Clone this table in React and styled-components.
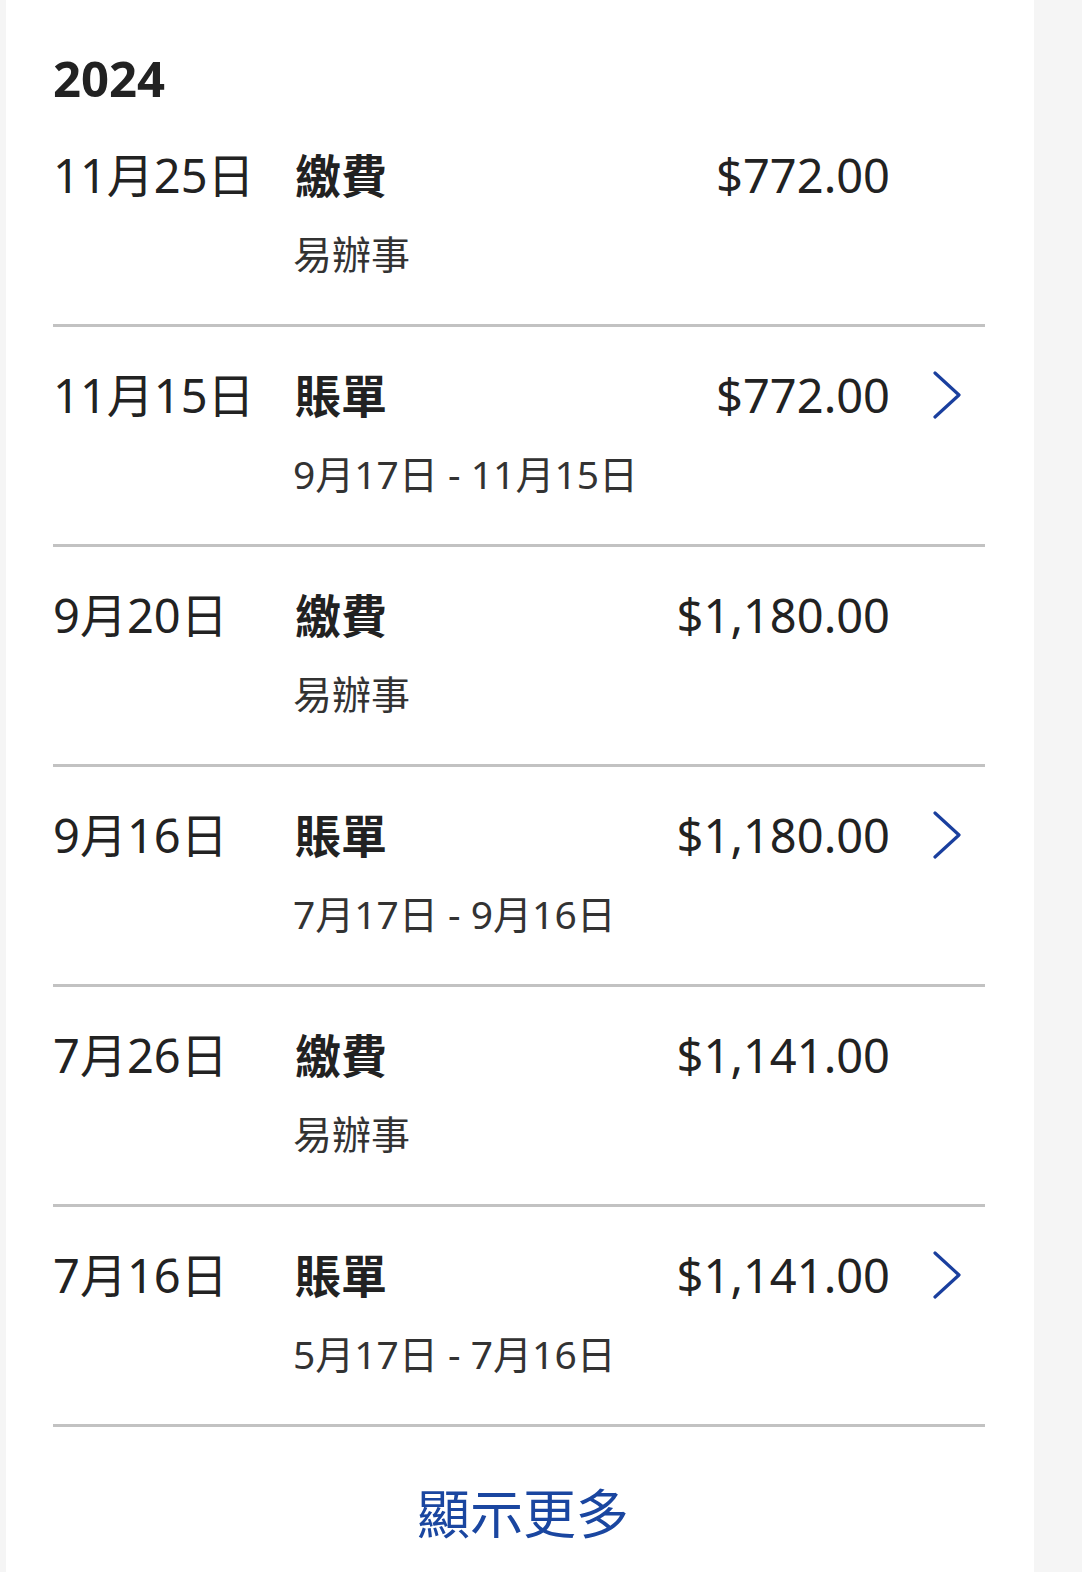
import React from 'react';
import styled, { createGlobalStyle } from 'styled-components';

const GlobalStyle = createGlobalStyle`
  html, body {
    margin: 0;
    padding: 0;
    background: #f5f5f5;
  }
  body {
    font-family: "Noto Sans", "Noto Sans CJK TC", sans-serif;
    color: #222;
  }
`;

const transactions = [
  { date: '11月25日', title: '繳費', sub: '易辦事', amount: '$772.00', link: false },
  { date: '11月15日', title: '賬單', sub: '9月17日 - 11月15日', amount: '$772.00', link: true },
  { date: '9月20日', title: '繳費', sub: '易辦事', amount: '$1,180.00', link: false },
  { date: '9月16日', title: '賬單', sub: '7月17日 - 9月16日', amount: '$1,180.00', link: true },
  { date: '7月26日', title: '繳費', sub: '易辦事', amount: '$1,141.00', link: false },
  { date: '7月16日', title: '賬單', sub: '5月17日 - 7月16日', amount: '$1,141.00', link: true },
];

const Chevron = () => (
  <svg width="30" height="48" viewBox="0 0 30 48" fill="none">
    <path
      d="M3 2 L27 24 L3 46"
      stroke="#1a3f9e"
      strokeWidth="3.2"
      strokeLinecap="round"
      strokeLinejoin="round"
    />
  </svg>
);

const App = () => {
  return (
    <>
      <GlobalStyle />
      <Page>
        <Card>
          <Year>2024</Year>
          <List>
            {transactions.map((t, i) => (
              <Row key={i}>
                <DateCell>{t.date}</DateCell>
                <Title>{t.title}</Title>
                <Amount>{t.amount}</Amount>
                <ArrowCell>{t.link && <Chevron />}</ArrowCell>
                <Sub>{t.sub}</Sub>
              </Row>
            ))}
          </List>
          <MoreButton>顯示更多</MoreButton>
        </Card>
      </Page>
    </>
  );
};

const Page = styled.div`
  min-height: 1572px;
  padding-left: 6px;
`;

const Card = styled.div`
  width: 1028px;
  min-height: 1572px;
  background: #fff;
  box-sizing: border-box;
  padding: 49px 49px 0 47px;
  display: flex;
  flex-direction: column;
`;

const Year = styled.h2`
  margin: 0;
  font-size: 49px;
  font-weight: 700;
  line-height: 58px;
  color: #222;
`;

const List = styled.div`
  display: flex;
  flex-direction: column;
`;

const Row = styled.div`
  display: grid;
  grid-template-columns: 242px 1fr auto 95px;
  grid-template-rows: 60px 50px;
  row-gap: 24px;
  align-items: center;
  padding: 38px 0 45px;
  border-bottom: 3px solid #c2c2c2;
`;

const DateCell = styled.div`
  font-size: 47px;
  line-height: 60px;
  font-weight: 400;
  white-space: nowrap;
`;

const Title = styled.div`
  font-size: 46px;
  line-height: 60px;
  font-weight: 700;
`;

const Amount = styled.div`
  font-size: 47px;
  line-height: 60px;
  font-weight: 400;
  text-align: right;
  color: #222;
`;

const ArrowCell = styled.div`
  display: flex;
  align-items: center;
  padding-left: 42px;
  height: 60px;
`;

const Sub = styled.div`
  grid-column: 2 / 5;
  font-size: 39px;
  line-height: 50px;
  color: #333;
  margin-left: -2px;
`;

const MoreButton = styled.button`
  align-self: center;
  margin-top: 57px;
  margin-left: 8px;
  border: none;
  background: none;
  padding: 0;
  font-family: "Noto Sans", "Noto Sans CJK TC", sans-serif;
  font-size: 53px;
  line-height: 60px;
  font-weight: 400;
  color: #1a46a0;
  cursor: pointer;
`;

export default App;
